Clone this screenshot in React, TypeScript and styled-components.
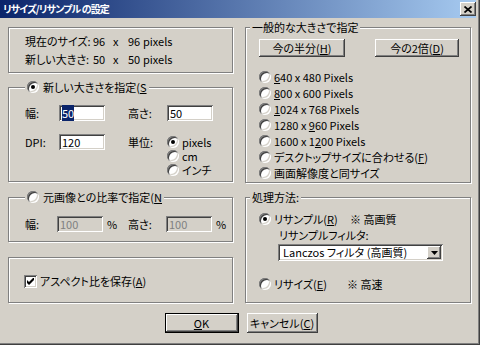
import React from 'react';
import styled, { createGlobalStyle, css } from 'styled-components';

const Global = createGlobalStyle`
  html, body { margin: 0; padding: 0; background: #d4d0c8; }
  body {
    font-family: "Noto Sans CJK JP", "Liberation Sans", sans-serif;
    font-size: 11px;
    color: #000;
    font-feature-settings: "palt" 1;
  }
  * { box-sizing: border-box; }
`;

const raised = css`
  background: #d4d0c8;
  box-shadow: inset -1px -1px 0 #404040, inset 1px 1px 0 #fff, inset -2px -2px 0 #808080, inset 2px 2px 0 #d4d0c8;
`;

const sunken = css`
  box-shadow: inset 1px 1px 0 #808080, inset -1px -1px 0 #fff, inset 2px 2px 0 #404040, inset -2px -2px 0 #d4d0c8;
`;

const Window = styled.div`
  width: 480px;
  height: 345px;
  background: #d4d0c8;
  display: flex;
  flex-direction: column;
  padding: 0 4px 4px 0;
  box-shadow: inset -1px -1px 0 #404040, inset -2px -2px 0 #808080;
  overflow: hidden;
`;

const TitleBar = styled.div`
  height: 18px;
  flex: none;
  display: flex;
  align-items: center;
  justify-content: space-between;
  padding: 0 0 0 3px;
  background: linear-gradient(to right, #0a246a, #a6caf0);
`;

const TitleText = styled.span`
  color: #fff;
  font-size: 10px;
  font-weight: 700;
  letter-spacing: -0.9px;
  line-height: 18px;
  white-space: pre;
`;

const CloseButton = styled.div`
  ${raised};
  width: 16px;
  height: 14px;
  display: flex;
  align-items: center;
  justify-content: center;
`;

const Main = styled.div`
  display: grid;
  grid-template-columns: 225px 226px;
  column-gap: 12px;
  padding-left: 8px;
`;

const Column = styled.div`
  display: flex;
  flex-direction: column;
`;

const Group = styled.div<{ $mt: number; $h: number }>`
  margin-top: ${p => p.$mt}px;
  height: ${p => p.$h}px;
  border: 1px solid #808080;
  box-shadow: inset 1px 1px 0 #fff, 1px 1px 0 #fff;
  display: flex;
  flex-direction: column;
`;

const Caption = styled.div<{ $ml: number }>`
  display: flex;
  align-items: center;
  gap: 4px;
  width: fit-content;
  height: 14px;
  line-height: 14px;
  margin: -8px 0 0 ${p => p.$ml}px;
  padding: 0 2px;
  background: #d4d0c8;
  white-space: nowrap;
`;

const SizeInfo = styled.div`
  display: grid;
  grid-template-columns: 68px 20px 15px 15px auto;
  padding: 4px 0 0 16px;
  line-height: 18px;
  white-space: nowrap;
`;

const FieldRow = styled.div<{ $mt: number; $pl?: number }>`
  display: flex;
  align-items: flex-start;
  margin-top: ${p => p.$mt}px;
  padding-left: ${p => p.$pl ?? 16}px;
`;

const Label = styled.span<{ $w?: number; $ml?: number }>`
  flex: none;
  ${p => p.$w !== undefined && css`width: ${p.$w}px;`}
  margin-left: ${p => p.$ml ?? 0}px;
  line-height: 16px;
  white-space: nowrap;
`;

const TextBox = styled.div<{ $disabled?: boolean }>`
  ${sunken};
  flex: none;
  width: 46px;
  height: 16px;
  padding: 0 3px;
  line-height: 16px;
  background: ${p => (p.$disabled ? '#d4d0c8' : '#fff')};
  color: ${p => (p.$disabled ? '#808080' : '#000')};
`;

const Selected = styled.span`
  background: #0a246a;
  color: #fff;
`;

const Pct = styled.span<{ $w: number }>`
  flex: none;
  width: ${p => p.$w}px;
  padding-left: 4px;
  line-height: 16px;
`;

const RadioList = styled.div<{ $mt: number; $pl?: number }>`
  display: flex;
  flex-direction: column;
  margin-top: ${p => p.$mt}px;
  padding-left: ${p => p.$pl ?? 0}px;
`;

const Option = styled.div<{ $h: number }>`
  display: flex;
  align-items: center;
  gap: 3px;
  height: ${p => p.$h}px;
  line-height: ${p => p.$h}px;
  white-space: nowrap;
`;

const RadioDot = styled.span<{ $checked?: boolean }>`
  flex: none;
  position: relative;
  width: 12px;
  height: 12px;
  border-radius: 50%;
  background: #fff;
  ${sunken};
  ${p =>
    p.$checked &&
    css`
      &::after {
        content: '';
        position: absolute;
        left: 4px;
        top: 4px;
        width: 4px;
        height: 4px;
        border-radius: 50%;
        background: #000;
      }
    `}
`;

const CheckBox = styled.span`
  flex: none;
  width: 13px;
  height: 13px;
  background: #fff;
  ${sunken};
  display: flex;
  align-items: center;
  justify-content: center;
`;

const CheckRow = styled.div`
  display: flex;
  align-items: center;
  gap: 3px;
  margin-top: 16px;
  padding-left: 15px;
  height: 14px;
  line-height: 14px;
`;

const ButtonRow = styled.div`
  display: flex;
  margin-top: 5px;
  padding-left: 13px;
`;

const PushButton = styled.div<{ $w: number; $ml?: number; $h?: number; $default?: boolean }>`
  ${raised};
  flex: none;
  width: ${p => p.$w}px;
  height: ${p => p.$h ?? 18}px;
  margin-left: ${p => p.$ml ?? 0}px;
  display: flex;
  align-items: center;
  justify-content: center;
  line-height: 14px;
  white-space: nowrap;
  ${p =>
    p.$default &&
    css`
      border: 1px solid #000;
    `}
`;

const Note = styled.span`
  white-space: pre;
`;

const SubLabel = styled.div`
  margin-top: 2px;
  padding-left: 33px;
  line-height: 14px;
`;

const Combo = styled.div`
  ${sunken};
  background: #fff;
  margin: 2px 0 0 32px;
  width: 165px;
  height: 17px;
  display: flex;
  align-items: center;
  justify-content: space-between;
  padding: 2px 2px 2px 5px;
  line-height: 13px;
  white-space: pre;
`;

const ComboButton = styled.div`
  ${raised};
  width: 14px;
  height: 13px;
  display: flex;
  align-items: center;
  justify-content: center;
`;

const Footer = styled.div`
  display: flex;
  justify-content: center;
  gap: 8px;
  margin-top: 10px;
  padding-left: 6px;
`;

const U = styled.span`
  text-decoration: underline;
  text-underline-offset: 1px;
`;

const Radio: React.FC<{ checked?: boolean; h: number; children: React.ReactNode }> = ({ checked, h, children }) => (
  <Option $h={h}>
    <RadioDot $checked={checked} />
    {children}
  </Option>
);

export default function App() {
  return (
    <>
      <Global />
      <Window>
        <TitleBar>
          <TitleText>リサイズ/リサンプル の設定</TitleText>
          <CloseButton>
            <svg width="8" height="7" viewBox="0 0 8 7">
              <path d="M0.5 0.5L7.5 6.5M7.5 0.5L0.5 6.5" stroke="#000" strokeWidth="1.7" />
            </svg>
          </CloseButton>
        </TitleBar>
        <Main>
          <Column>
            <Group $mt={9} $h={46}>
              <SizeInfo>
                <span>現在のサイズ:</span>
                <span>96</span>
                <span>x</span>
                <span>96</span>
                <span>pixels</span>
                <span>新しい大きさ:</span>
                <span>50</span>
                <span>x</span>
                <span>50</span>
                <span>pixels</span>
              </SizeInfo>
            </Group>
            <Group $mt={14} $h={95}>
              <Caption $ml={16}>
                <RadioDot $checked />
                <span>
                  新しい大きさを指定(<U>S</U>
                </span>
              </Caption>
              <FieldRow $mt={11}>
                <Label $w={34}>幅:</Label>
                <TextBox>
                  <Selected>50</Selected>
                </TextBox>
                <Label $w={39} $ml={23}>
                  高さ:
                </Label>
                <TextBox>50</TextBox>
              </FieldRow>
              <FieldRow $mt={13}>
                <Label $w={34}>DPI:</Label>
                <TextBox>120</TextBox>
                <Label $w={39} $ml={23}>
                  単位:
                </Label>
                <RadioList $mt={1}>
                  <Radio checked h={14}>pixels</Radio>
                  <Radio h={14}>cm</Radio>
                  <Radio h={14}>インチ</Radio>
                </RadioList>
              </FieldRow>
            </Group>
            <Group $mt={15} $h={45}>
              <Caption $ml={16}>
                <RadioDot />
                <span>
                  元画像との比率で指定(<U>N</U>
                </span>
              </Caption>
              <FieldRow $mt={12}>
                <Label $w={32}>幅:</Label>
                <TextBox $disabled>100</TextBox>
                <Pct $w={25}>%</Pct>
                <Label $w={38}>高さ:</Label>
                <TextBox $disabled>100</TextBox>
                <Pct $w={20}>%</Pct>
              </FieldRow>
            </Group>
            <Group $mt={15} $h={46}>
              <CheckRow>
                <CheckBox>
                  <svg width="7" height="7" viewBox="0 0 7 7">
                    <path d="M0 2L2 4L6 0H7V2L2 7L0 5Z" fill="#000" />
                  </svg>
                </CheckBox>
                <span>
                  アスペクト比を保存(<U>A</U>)
                </span>
              </CheckRow>
            </Group>
          </Column>
          <Column>
            <Group $mt={9} $h={156}>
              <Caption $ml={4}>一般的な大きさで指定</Caption>
              <ButtonRow>
                <PushButton $w={86}>
                  今の半分(<U>H</U>)
                </PushButton>
                <PushButton $w={84} $ml={30}>
                  今の2倍(<U>D</U>)
                </PushButton>
              </ButtonRow>
              <RadioList $mt={12} $pl={13}>
                <Radio h={16}>
                  <span>
                    <U>6</U>40 x 480 Pixels
                  </span>
                </Radio>
                <Radio h={16}>
                  <span>
                    <U>8</U>00 x 600 Pixels
                  </span>
                </Radio>
                <Radio h={16}>
                  <span>
                    <U>1</U>024 x 768 Pixels
                  </span>
                </Radio>
                <Radio h={16}>
                  <span>
                    1280 x <U>9</U>60 Pixels
                  </span>
                </Radio>
                <Radio h={16}>
                  <span>
                    1600 x 1<U>2</U>00 Pixels
                  </span>
                </Radio>
                <Radio h={16}>
                  <span>
                    デスクトップサイズに合わせる(<U>F</U>)
                  </span>
                </Radio>
                <Radio h={16}>画面解像度と同サイズ</Radio>
              </RadioList>
            </Group>
            <Group $mt={14} $h={106}>
              <Caption $ml={4}>処理方法:</Caption>
              <RadioList $mt={8} $pl={13}>
                <Radio checked h={14}>
                  <Label $w={73}>
                    リサンプル(<U>R</U>)
                  </Label>
                  <Note>※ 高画質</Note>
                </Radio>
              </RadioList>
              <SubLabel>リサンプルフィルタ:</SubLabel>
              <Combo>
                <span>Lanczos フィルタ (高画質)</span>
                <ComboButton>
                  <svg width="7" height="4" viewBox="0 0 7 4">
                    <path d="M0 0H7L3.5 4Z" fill="#000" />
                  </svg>
                </ComboButton>
              </Combo>
              <RadioList $mt={16} $pl={13}>
                <Radio h={14}>
                  <Label $w={70}>
                    リサイズ(<U>E</U>)
                  </Label>
                  <Note>※ 高速</Note>
                </Radio>
              </RadioList>
            </Group>
          </Column>
        </Main>
        <Footer>
          <PushButton $w={74} $h={20} $default>
            <U>O</U>K
          </PushButton>
          <PushButton $w={71} $h={20}>
            キャンセル(<U>C</U>)
          </PushButton>
        </Footer>
      </Window>
    </>
  );
}
